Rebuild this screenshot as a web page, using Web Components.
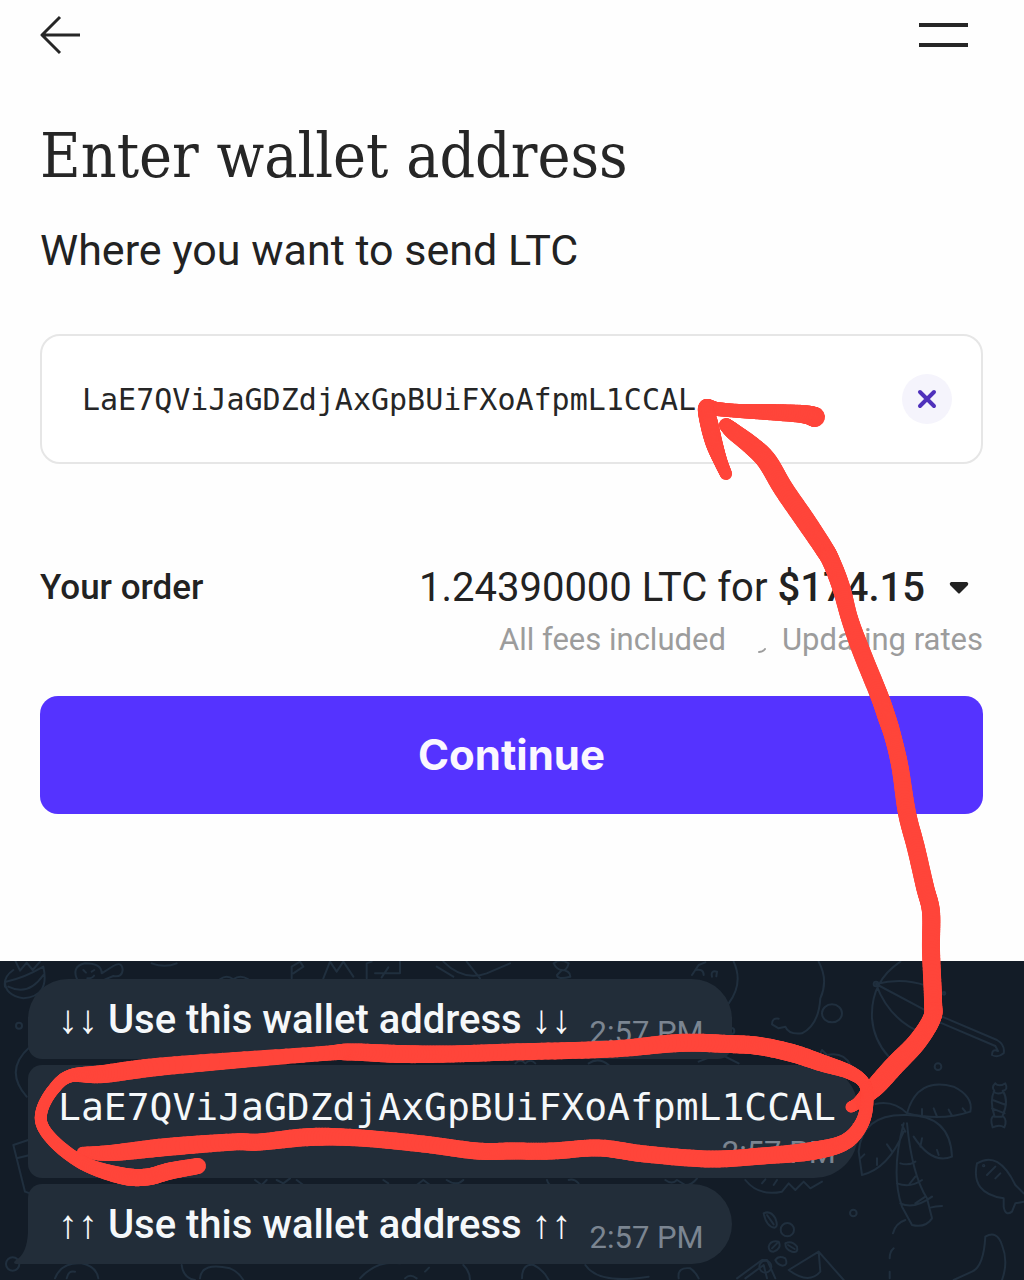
<!DOCTYPE html>
<html lang="en">
<head>
<meta charset="utf-8">
<meta name="viewport" content="width=device-width, initial-scale=1">
<title>Enter wallet address</title>
<style>
  body { margin: 0; background: #fefefe; font-family: Roboto, "Liberation Sans", sans-serif; color: #222; }
</style>
</head>
<body>
<wallet-page>
  <wallet-order>
    <top-bar></top-bar>
    <page-intro>
      <span slot="title">Enter wallet address</span>
      <span slot="hint">Where you want to send LTC</span>
    </page-intro>
    <address-field value="LaE7QViJaGDZdjAxGpBUiFXoAfpmL1CCAL"></address-field>
    <order-summary>
      <span slot="label">Your order</span>
      <span slot="amount">1.24390000 LTC for</span>
      <b slot="price">$174.15</b>
      <span slot="fees">All fees included</span>
      <span slot="status">Updating rates</span>
    </order-summary>
    <primary-button>Continue</primary-button>
  </wallet-order>
  <chat-thread>
    <chat-bubble class="first" time="2:57 PM">↓↓ <b>Use this wallet address</b> ↓↓</chat-bubble>
    <chat-bubble class="code" time="2:57 PM">LaE7QViJaGDZdjAxGpBUiFXoAfpmL1CCAL</chat-bubble>
    <chat-bubble class="last" time="2:57 PM">↑↑ <b>Use this wallet address</b> ↑↑</chat-bubble>
  </chat-thread>
  <ink-layer slot="ink"></ink-layer>
</wallet-page>

<script>
const define = (name, html, setup) => customElements.define(name, class extends HTMLElement {
  constructor() {
    super();
    this.attachShadow({ mode: 'open' }).innerHTML = html;
  }
  connectedCallback() { if (setup) setup(this, this.shadowRoot); }
});

define('wallet-page', `
<style>
  :host { display: flex; flex-direction: column; position: relative; min-height: 100vh; overflow: hidden; }
</style>
<slot></slot><slot name="ink"></slot>`);

define('wallet-order', `
<style>
  :host { display: flex; flex-direction: column; padding: 0 41px 147px 40px; background: #fefefe; }
</style>
<slot></slot>`);

define('top-bar', `
<style>
  :host { display: block; }
  nav { display: flex; justify-content: space-between; align-items: center; height: 70px; padding-right: 15px; }
  button { display: flex; padding: 0; border: 0; background: none; color: #262626; cursor: pointer; }
  svg { display: block; fill: none; stroke: currentColor; }
</style>
<nav>
  <button aria-label="Back"><svg width="40" height="40" viewBox="0 0 40 40" stroke-width="3"><path d="M40 20H2M20 2 2 20l18 18" stroke-linejoin="round"/></svg></button>
  <button aria-label="Menu"><svg width="49" height="40" viewBox="0 0 49 40" stroke-width="4"><path d="M0 10h49M0 30h49"/></svg></button>
</nav>`);

define('page-intro', `
<style>
  :host { display: block; }
  h1 { margin: 0; padding-top: 44px; font: 400 62px/84px "DejaVu Serif Condensed", "DejaVu Serif", serif; color: #262626; }
  p { margin: 0; padding: 25px 0 57px; font-size: 43px; line-height: 54px; }
</style>
<h1><slot name="title"></slot></h1>
<p><slot name="hint"></slot></p>`);

define('address-field', `
<style>
  :host { display: block; }
  .box { display: flex; align-items: center; box-sizing: border-box; height: 130px; padding: 0 29px 0 40px;
         border: 2px solid #e6e6e6; border-radius: 20px; background: #fff; }
  input { flex: 1; min-width: 0; padding: 2px 0 0; border: 0; outline: 0; background: none; color: #262626;
          font: 30px/40px "DejaVu Sans Mono", monospace; }
  button { display: grid; place-items: center; width: 50px; height: 50px; padding: 0; border: 0; border-radius: 50%; background: #f5f4fc; }
  svg { fill: none; stroke: #4f31bb; stroke-width: 4; stroke-linecap: round; }
</style>
<div class="box">
  <input aria-label="Wallet address" spellcheck="false">
  <button aria-label="Clear address"><svg width="20" height="20" viewBox="0 0 20 20"><path d="M3 3l14 14M17 3L3 17"/></svg></button>
</div>`, (host, root) => {
  const input = root.querySelector('input');
  input.value = host.getAttribute('value');
  root.querySelector('button').onclick = () => { input.value = ''; input.focus(); };
});

define('order-summary', `
<style>
  :host { display: flex; justify-content: space-between; align-items: flex-start; padding: 96px 0 32px; }
  .label { font-size: 35px; line-height: 56px; font-weight: 500; }
  .side { display: flex; flex-direction: column; align-items: flex-end; }
  button { display: flex; align-items: center; gap: 10px; padding: 0 14px 0 0; border: 0; background: none;
           color: inherit; font: 400 40px/56px Roboto, sans-serif; }
  ::slotted(b) { font-weight: 500; }
  .caret { margin-left: 14px; fill: #222; }
  .meta { display: flex; gap: 30px; color: #9c9c9c; font-size: 31px; line-height: 48px; }
  .status { display: flex; gap: 14px; align-items: center; }
  .status svg { fill: none; stroke: #9c9c9c; stroke-width: 2; stroke-linecap: round; }
</style>
<span class="label"><slot name="label"></slot></span>
<div class="side">
  <button aria-expanded="false"><slot name="amount"></slot><slot name="price"></slot>
    <svg class="caret" width="20" height="12" viewBox="0 0 20 12"><path d="M2 0h16q2 1 1 3l-8 8q-1 1-2 0L1 3Q0 1 2 0Z"/></svg></button>
  <div class="meta">
    <slot name="fees"></slot>
    <span class="status"><svg width="12" height="30" viewBox="0 0 12 30"><path d="M3 27q4 0 6-3"/></svg><slot name="status"></slot></span>
  </div>
</div>`);

define('primary-button', `
<style>
  :host { display: block; }
  button { display: block; width: 100%; padding: 32px 0; border: 0; border-radius: 18px; background: #5533ff; color: #fbf7ff;
           font: 700 42px/54px Inter, sans-serif; }
</style>
<button><slot></slot></button>`);

define('chat-thread', `
<style>
  :host { display: block; flex: 1; position: relative; overflow: hidden; background: #131c27; }
  .art { position: absolute; left: 0; top: 0; width: 100%; fill: none; stroke: #202f3e; stroke-width: 6; stroke-linecap: round; stroke-linejoin: round; }
  .list { position: relative; display: flex; flex-direction: column; align-items: flex-start; gap: 6px; padding: 18px 28px 16px; }
</style>
<svg class="art" viewBox="0 33 3072 957" aria-hidden="true">
  <g>
    <path d="M45 30L60 62 80 38 98 60 120 35M18 95Q70 85 130 50M15 110Q10 80 40 60M25 110q60 30 105-35M130 50q20 90-60 95-55-10-55-50"/>
    <path d="M235 95q-25-45 20-55 50 0 50 30l35-22q25-15 28 10 0 25-28 20l-25 10M250 60l8 8M275 65l8-5M262 85q15 0 20-8"/>
    <circle cx="57" cy="227" r="9"/><circle cx="38" cy="942" r="20"/>
    <path d="M90 290q-80 70-10 150M85 570L40 585 75 725 90 730M50 625l40-10M165 985q20-50 80-45 45 10 50 45M200 985q5-25 25-20M545 945q5 40 40 45M600 985q5-50 90-30 25 10 40 35M1080 985q50-55 120-45M1390 945q20 20 20 45M1215 985q15-15 35 0M1275 965l12-12M455 40q40 15 75 0M660 88q20-15 40 0 20-15 45 0"/>
    <path d="M875 85V50l25-15 10 15-30 20M970 85l20-50 20 30 20-30 30 45M1100 85V40l15-5M1125 70h75V35M1145 82l20-30M1310 50l50 30M1330 35q60 60 130 35l70-30M1400 35l40 50M765 690l20 15 15-15M830 690l20 10 20-15M890 690l20 15M1150 690l15 10M1250 705l20-15 20 15M1340 690q30 20 50 0"/>
  </g>
  <g transform="translate(1536 0)">
    <path d="M125 40q20-15 45 0-5 25-25 20 30 0 30 20-40 10-40-5l15-15q-15 0-25-20M540 75l20-30 20-8M550 60q25-5 25 15M600 80q-5-20 15-15l-2 14M665 35q30 65-15 125"/>
    <path d="M920 35q30 55 5 110-5 80-55 105-40 5-50-20l-20 5-20-12q0-20 20-17M930 190a30 27 0 1 0 60 0 30 27 0 1 0-60 0"/>
    <path d="M1165 35q-90 60-85 170 5 65 50 115M1092 102q80-20 150 5M1092 102q40 110 145 150M1240 180l-10 65M1092 102l150 80M1290 200l165 70q25 15 20 40-18 15-35 5 0-20 18-12l-8-15-165-70"/>
    <circle cx="1092" cy="102" r="7"/><circle cx="1278" cy="350" r="10"/><circle cx="1024" cy="789" r="10"/><circle cx="658" cy="243" r="9"/><circle cx="1296" cy="130" r="4"/>
    <path d="M920 320l10-20 15 15q50-10 70 30M10 340q15-15 30 0 15-15 30 0M230 340q30-20 60 5M560 335l50-20M630 315l50 25"/>
    <path d="M1185 490q-40-40-95-28M1185 490q30-110 140-80 60 30 50 75-90 30-190 5M1230 495v-18M1275 500l-10-25M1320 497l-10-18M1360 485l-8-10"/>
    <path d="M1185 495q-135-5-145 110l10 70q80-20 125-130M1045 625l12-12M1095 645V625M1140 605l-15-22M1185 495q130 0 135 125-60 25-115-60M1225 590l5-25M1280 615l-5-15M1180 545l-10-20M1175 520q-40 150-5 250l30 55q40 10 60-20l-15-60q-45-70-60-225M1165 640q25 8 45-5M1155 700q40 15 75-10M1165 760q40 20 95-20M1190 705l20-25M1210 760l30-20M1290 768q-20 0-35 5M1180 810q-30 10-37 40M1145 895q-12 10-12 30M1133 965v20"/>
    <path d="M1450 400q10 12 30 0 10 20-8 22 20 30 0 75 15 15 5 35-15-10-35 0-10-30 5-35-15-45 0-75-10-10 3-22M1445 425q10 10 28 2M1442 450l40 15M1440 475l38 15M1448 500h22"/>
    <path d="M1395 640q65-40 115 65l25 25M1395 640q-20 90 80 105v25q5 30 25 15l10-25 26-5M1425 675l25-25M1450 685l15-15"/><circle cx="1415" cy="647" r="2"/>
    <path d="M755 790q20-10 35 15 10 25-2 28-25-3-33-43M765 795l20 28M770 890q5-20 30-15 10 20-15 30-15 0-15-15M780 895l15-15M820 880q20-10 35 10 5 20-15 15-20-5-20-25M828 885l20 12M790 930q10-15 30-5 10 20-8 22-15-2-22-17"/><circle cx="826" cy="839" r="20"/>
    <path d="M675 985l75-55 15 0 25 55M700 985l55-40 10 40M920 905L830 960q60 45 95 5L920 905l75 85M1420 860q35-20 50 25 20 50 0 105M1420 860q-5 90-40 105l-55 25"/><circle cx="760" cy="950" r="18"/>
    <path d="M105 690q5 20 20 15M170 690q15-5 30 10M460 690q20 15 35 0l25 15q20 0 35-20M700 690q40 50 110 35l20-25 20 20 25-25 20 20 35-20M750 700l10-12M785 705l10-15M30 985q0-45 35-40 30 15 45 45M220 945q40 60 190 35M500 985q-5-35 35-30 15 10 25 30"/>
  </g>
</svg>
<div class="list"><slot></slot></div>`);

define('chat-bubble', `
<style>
  :host { display: flex; align-items: flex-end; position: relative; box-sizing: border-box; padding: 14px 28px 12px 30px;
          background: #222d39; border-radius: 14px 40px 40px 14px; color: #f5f8fa; font-size: 40px; line-height: 54px; }
  :host(.first) { border-top-left-radius: 40px; border-bottom-right-radius: 14px; }
  :host(.last) { border-bottom-left-radius: 0; }
  :host(.code) { flex-direction: column; padding: 12px 22px 9px 30px; border-radius: 14px 44px 44px 14px; margin-right: -28px;
                 font: 38px/60px "DejaVu Sans Mono", monospace; overflow-wrap: anywhere; }
  ::slotted(b) { font-weight: 500; }
  time { margin-left: 18px; color: #7b8591; font: 31px/32px Roboto, sans-serif; white-space: nowrap; }
  :host(:not(.code)) time { line-height: 28px; }
  .tail { display: none; position: absolute; left: -14px; bottom: 0; fill: #222d39; }
  :host(.last) .tail { display: block; }
</style>
<span><slot></slot></span><time></time>
<svg class="tail" width="14" height="32" viewBox="0 0 14 32" aria-hidden="true"><path d="M14 0Q13 22 2 28q-4 3 0 4h12Z"/></svg>`,
(host, root) => { root.querySelector('time').textContent = host.getAttribute('time'); });

/* Freehand marker strokes: each point is x, y, pen width. */
const STROKES = [
  [[726,425,14],[734,432,17],[752,446,19],[767,461,20],[783,488,20],[805,520,20],[823,547,19],[831,561,18],[841,587,18],[850,620,17],[862,653,18],[879,695,18],[887,718,18],[893,737,17],[900,767,17],[907,813,18],[916,848,18],[925,887,18],[931,912,18],[931,950,18],[933,1000,18],[932,1018,18],[917,1042,19],[895,1065,20],[875,1087,19],[859,1102,12],[851,1107,11]],
  [[815,417,20],[802,414,18],[767,412,16],[740,411,14],[717,409,14],[706,407,15],[709,423,18],[714,443,17],[720,460,14],[726,474,12]],
  [[82,1152,10],[110,1153,16],[167,1147,18],[233,1142,17],[260,1142,17],[310,1137,18],[360,1138,17],[423,1144,17],[477,1151,17],[512,1151,17],[552,1151,17],[599,1148,17],[645,1154,17],[709,1159,17],[762,1156,17],[812,1151,18],[845,1142,16],[862,1123,14],[867,1100,13],[864,1083,12],[849,1072,14],[822,1063,17],[792,1053,18],[759,1046,18],[729,1044,18],[679,1043,18],[612,1049,17],[512,1052,17],[450,1054,17],[400,1054,18],[350,1052,17],[317,1054,15],[167,1066,18],[103,1074,18],[70,1076,13],[53,1090,12],[42,1110,12],[43,1127,12],[60,1147,13],[87,1165,14],[123,1176,17],[147,1177,17],[170,1171,17],[198,1166,16]]
];

function inkPath(points) {
  const path = [];
  for (let i = 0; i < points.length - 1; i++) {
    const a = points[Math.max(i - 1, 0)], b = points[i], c = points[i + 1], d = points[Math.min(i + 2, points.length - 1)];
    for (let s = 0; s < 16; s++) {
      const t = s / 16;
      path.push([0, 1, 2].map(k => 0.5 * (2 * b[k] + (c[k] - a[k]) * t + (2 * a[k] - 5 * b[k] + 4 * c[k] - d[k]) * t * t + (3 * b[k] - a[k] - 3 * c[k] + d[k]) * t * t * t)));
    }
  }
  path.push(points[points.length - 1]);
  return path.slice(1).map((p, i) => {
    const q = path[i];
    return `<line x1="${q[0]}" y1="${q[1]}" x2="${p[0]}" y2="${p[1]}" stroke-width="${(p[2] + q[2]) / 2}"/>`;
  }).join('');
}

define('ink-layer', `
<style>
  :host { display: block; position: absolute; left: 0; top: 0; width: 100%; pointer-events: none; }
  svg { display: block; width: 100%; stroke: #ff453a; stroke-linecap: round; }
</style>
<svg viewBox="0 0 1024 1280" aria-hidden="true">${STROKES.map(inkPath).join('')}</svg>`);
</script>
</body>
</html>
